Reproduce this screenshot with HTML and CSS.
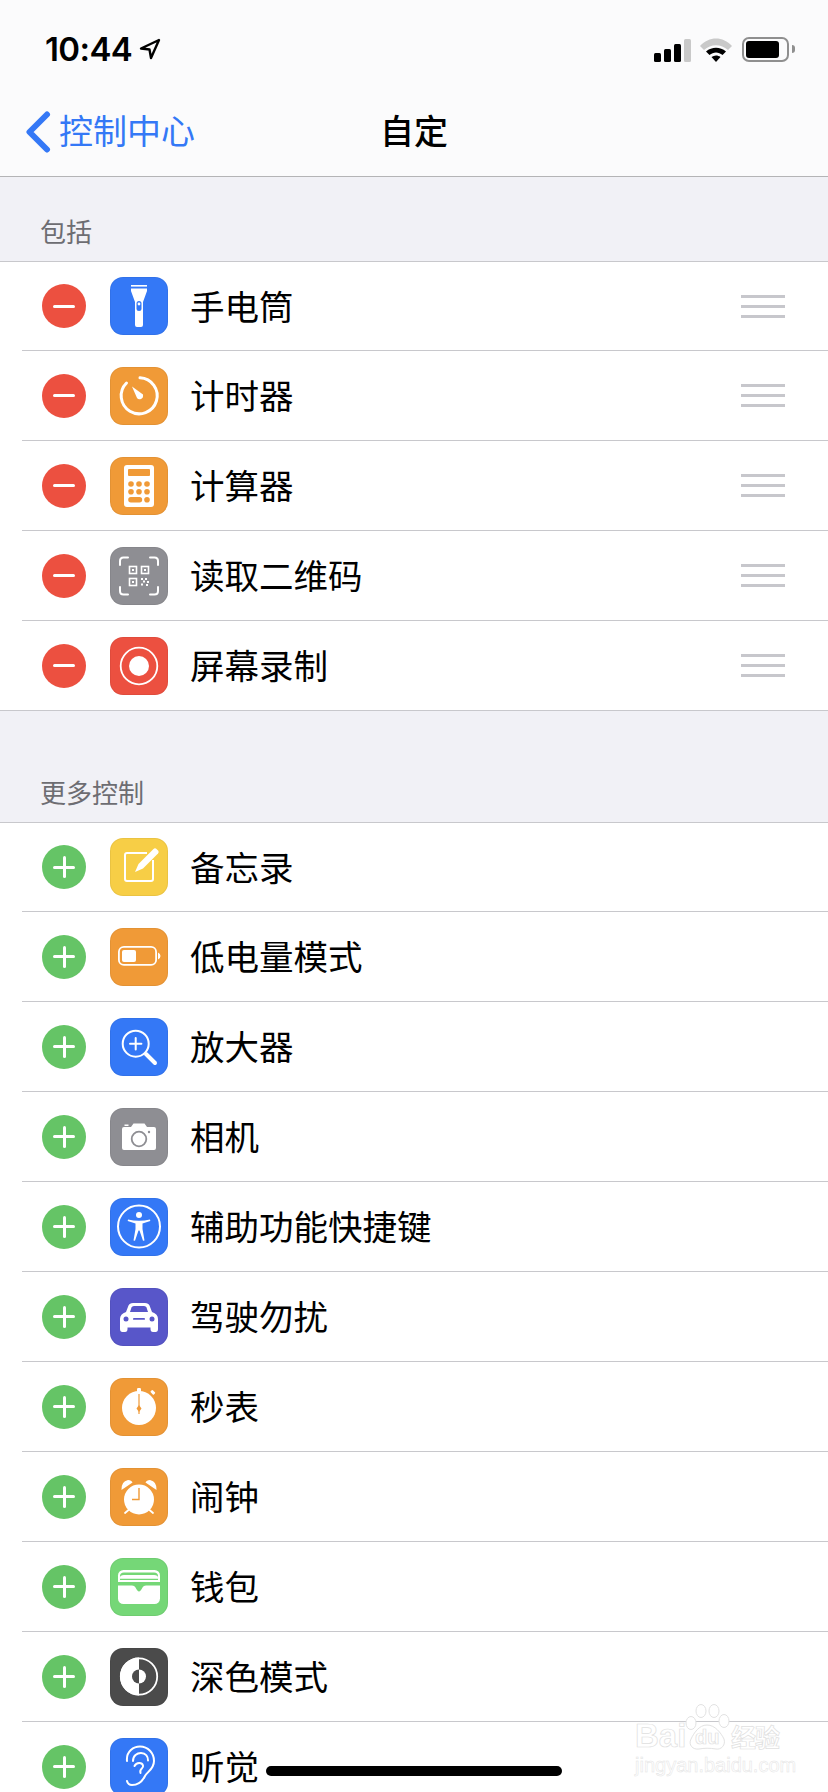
FILE: index.html
```html
<!DOCTYPE html>
<html lang="zh-CN">
<head>
<meta charset="utf-8">
<title>自定</title>
<link rel="stylesheet" href="styles.css">
</head>
<body>
<div class="phone">
  <header class="top">
    <div class="status">
      <div class="time-wrap">
        <span class="time">10:44</span>
        <svg class="loc" viewBox="0 0 22 22"><path d="M20 2 L2 10.5 L10.5 11.5 L12 20 Z" fill="none" stroke="#000" stroke-width="2.4" stroke-linejoin="round"/></svg>
      </div>
      <div class="indicators">
        <div class="signal"><i class="b1"></i><i class="b2"></i><i class="b3"></i><i class="b4"></i></div>
        <svg class="wifi" viewBox="0 0 32 24">
          <path d="M0 8 C9 -2 23 -2 32 8 L28 12 C21 5.5 11 5.5 4 12 Z" fill="#c9c9c9"/>
          <path d="M6 13.5 C12 8.5 20 8.5 26 13.5 L22.5 17 C18.5 13.5 13.5 13.5 9.5 17 Z" fill="#000"/>
          <path d="M11.5 19 C14.3 17 17.7 17 20.5 19 L16 24 Z" fill="#000"/>
        </svg>
        <div class="battery"><span class="battery-fill"></span></div>
        <span class="battery-nub"></span>
      </div>
    </div>
    <nav class="nav">
      <div class="back">
        <svg class="chev" viewBox="0 0 26 42"><path d="M22 3.5 L4.5 21 L22 38.5" fill="none" stroke="#3478f6" stroke-width="6" stroke-linecap="round" stroke-linejoin="round"/></svg>
        <span class="back-text">控制中心</span>
      </div>
      <div class="title">自定</div>
      <div></div>
    </nav>
  </header>

  <h2 class="sec sec-first">包括</h2>
  <ul class="list">
    <li class="row"><div class="body">
      <span class="act minus"></span>
      <span class="ico blue"><svg viewBox="0 0 58 58"><rect x="21" y="8" width="16" height="1.6" fill="#fff"/><path d="M21 11.5 H37 V14 L33 25 V48 Q33 50 31 50 H27 Q25 50 25 48 V25 L21 14 Z" fill="#fff"/><rect x="26.5" y="24" width="5" height="10" rx="2.5" fill="#3478f6"/><circle cx="29" cy="27" r="1.4" fill="#fff"/></svg></span>
      <span class="label">手电筒</span><span class="grip"><i></i><i></i><i></i></span>
    </div></li>
    <li class="row"><div class="body">
      <span class="act minus"></span>
      <span class="ico orange"><svg viewBox="0 0 58 58"><path d="M30 10.8 A18 18 0 1 1 16.5 16" fill="none" stroke="#fff" stroke-width="3" stroke-linecap="round"/><path d="M22 19.5 L33 27.5 Q33.5 31 31 32 Q28.5 33 27 31 Z" fill="#fff"/></svg></span>
      <span class="label">计时器</span><span class="grip"><i></i><i></i><i></i></span>
    </div></li>
    <li class="row"><div class="body">
      <span class="act minus"></span>
      <span class="ico orange"><svg viewBox="0 0 58 58"><rect x="14" y="8" width="30" height="42" rx="3" fill="#fff"/><rect x="18" y="12" width="22" height="7" rx="1" fill="#f09a37"/><g fill="#f09a37"><circle cx="21" cy="27" r="2.8"/><circle cx="29" cy="27" r="2.8"/><circle cx="37" cy="27" r="2.8"/><circle cx="21" cy="34.7" r="2.8"/><circle cx="29" cy="34.7" r="2.8"/><circle cx="37" cy="34.7" r="2.8"/><rect x="18.2" y="40" width="14" height="5.4" rx="2.7"/><circle cx="37" cy="42.7" r="2.8"/></g></svg></span>
      <span class="label">计算器</span><span class="grip"><i></i><i></i><i></i></span>
    </div></li>
    <li class="row"><div class="body">
      <span class="act minus"></span>
      <span class="ico gray"><svg viewBox="0 0 58 58"><g fill="none" stroke="#fff" stroke-width="2" stroke-linecap="round"><path d="M10 18 V14 Q10 10.5 13.5 10.5 H18"/><path d="M40 10.5 H44.5 Q48 10.5 48 14 V18"/><path d="M48 40 V44 Q48 47.5 44.5 47.5 H40"/><path d="M18 47.5 H13.5 Q10 47.5 10 44 V40"/></g><g fill="none" stroke="#fff" stroke-width="1.6"><rect x="19.5" y="19.5" width="7" height="7"/><rect x="31.5" y="19.5" width="7" height="7"/><rect x="19.5" y="31.5" width="7" height="7"/></g><g fill="#fff"><rect x="22" y="22" width="2" height="2"/><rect x="34" y="22" width="2" height="2"/><rect x="22" y="34" width="2" height="2"/><rect x="31" y="31" width="2" height="2"/><rect x="35" y="31" width="2" height="2"/><rect x="33" y="33.5" width="2" height="2"/><rect x="37" y="34" width="2" height="2"/><rect x="31" y="36.5" width="2" height="2"/><rect x="36" y="37" width="2" height="2"/></g></svg></span>
      <span class="label">读取二维码</span><span class="grip"><i></i><i></i><i></i></span>
    </div></li>
    <li class="row"><div class="body">
      <span class="act minus"></span>
      <span class="ico red"><svg viewBox="0 0 58 58"><circle cx="29" cy="29" r="18.3" fill="none" stroke="#fff" stroke-width="1.8"/><circle cx="29" cy="29" r="10" fill="#fff"/></svg></span>
      <span class="label">屏幕录制</span><span class="grip"><i></i><i></i><i></i></span>
    </div></li>
  </ul>

  <h2 class="sec sec-more">更多控制</h2>
  <ul class="list">
    <li class="row"><div class="body">
      <span class="act plus"></span>
      <span class="ico yellow"><svg viewBox="0 0 58 58"><path d="M37 15 H17 Q15 15 15 17 V41 Q15 43 17 43 H41 Q43 43 43 41 V22" fill="none" stroke="#fff" stroke-width="2"/><path d="M25 34 L28.5 26 L43.5 11 Q45 9.5 46.5 11 L48 12.5 Q49.5 14 48 15.5 L33 30.5 Z" fill="#fff"/></svg></span>
      <span class="label">备忘录</span>
    </div></li>
    <li class="row"><div class="body">
      <span class="act plus"></span>
      <span class="ico orange"><svg viewBox="0 0 58 58"><rect x="8.9" y="18.9" width="37.2" height="18" rx="5" fill="none" stroke="#fff" stroke-width="1.8"/><rect x="12" y="22" width="14" height="12" rx="2" fill="#fff"/><path d="M48 24.5 Q50.5 25.5 50.5 28 Q50.5 30.5 48 31.5 Z" fill="#fff"/></svg></span>
      <span class="label">低电量模式</span>
    </div></li>
    <li class="row"><div class="body">
      <span class="act plus"></span>
      <span class="ico blue"><svg viewBox="0 0 58 58"><circle cx="25.7" cy="25.7" r="13" fill="none" stroke="#fff" stroke-width="2"/><path d="M20 25.7 H31.4 M25.7 20 V31.4" stroke="#fff" stroke-width="2" stroke-linecap="round"/><path d="M36 36 L45 45" stroke="#fff" stroke-width="4" stroke-linecap="round"/></svg></span>
      <span class="label">放大器</span>
    </div></li>
    <li class="row"><div class="body">
      <span class="act plus"></span>
      <span class="ico gray"><svg viewBox="0 0 58 58"><path d="M14 19 H21 L23.5 15.5 H34.5 L37 19 H44 Q46 19 46 21 V40 Q46 42 44 42 H14 Q12 42 12 40 V21 Q12 19 14 19 Z" fill="#fff"/><rect x="14.5" y="16.5" width="4" height="1.5" fill="#fff"/><circle cx="29" cy="31" r="7.3" fill="#fff" stroke="#8e8e93" stroke-width="1.8"/><circle cx="39" cy="24" r="1.2" fill="#8e8e93"/></svg></span>
      <span class="label">相机</span>
    </div></li>
    <li class="row"><div class="body">
      <span class="act plus"></span>
      <span class="ico blue"><svg viewBox="0 0 58 58"><circle cx="29" cy="28.5" r="21" fill="none" stroke="#fff" stroke-width="2"/><circle cx="29" cy="17" r="3" fill="#fff"/><path d="M18 21.5 Q29 24 40 21.5 L40.3 23 L32.5 25.5 V31 L34.5 42.5 L33 42.8 L29.5 32.5 H28.5 L25 42.8 L23.5 42.5 L25.5 31 V25.5 L17.7 23 Z" fill="#fff"/></svg></span>
      <span class="label">辅助功能快捷键</span>
    </div></li>
    <li class="row"><div class="body">
      <span class="act plus"></span>
      <span class="ico indigo"><svg viewBox="0 0 58 58"><path d="M16 24 L18.5 17.5 Q19.5 15 23 15 H35 Q38.5 15 39.5 17.5 L42 24 Q48 26 48 31 V41 Q48 44 45.5 44 H43 Q40.5 44 40.5 41 V39.5 H17.5 V41 Q17.5 44 15 44 H12.5 Q10 44 10 41 V31 Q10 26 16 24 Z" fill="#fff"/><path d="M20 24 L21.5 19.5 Q22 18 24 18 H34 Q36 18 36.5 19.5 L38 24 Z" fill="#5856c9"/><circle cx="16" cy="31" r="2.5" fill="#5856c9"/><circle cx="42" cy="31" r="2.5" fill="#5856c9"/><rect x="23" y="30" width="12" height="1.8" rx=".9" fill="#5856c9"/></svg></span>
      <span class="label">驾驶勿扰</span>
    </div></li>
    <li class="row"><div class="body">
      <span class="act plus"></span>
      <span class="ico orange"><svg viewBox="0 0 58 58"><circle cx="29" cy="30" r="17" fill="#fff"/><rect x="27" y="10" width="4" height="8" rx="1.2" fill="#fff"/><rect x="40.5" y="13" width="4.5" height="3" rx=".8" transform="rotate(45 43 14.5)" fill="#fff"/><path d="M29 16 V36" stroke="#f09a37" stroke-width="1.2"/><path d="M29 27 L31.5 30.5 L29 34 L26.5 30.5 Z" fill="#f09a37"/></svg></span>
      <span class="label">秒表</span>
    </div></li>
    <li class="row"><div class="body">
      <span class="act plus"></span>
      <span class="ico orange"><svg viewBox="0 0 58 58"><circle cx="29" cy="31.5" r="15" fill="#fff"/><path d="M11.5 22 Q11 13.5 18 12 Q21.5 12 22.5 14.5 Z" fill="#fff"/><path d="M46.5 22 Q47 13.5 40 12 Q36.5 12 35.5 14.5 Z" fill="#fff"/><path d="M15 45 L18.5 42 M43 45 L39.5 42" stroke="#fff" stroke-width="1.8" stroke-linecap="round"/><path d="M29 20 V31.5 H22" fill="none" stroke="#f09a37" stroke-width="1.4"/></svg></span>
      <span class="label">闹钟</span>
    </div></li>
    <li class="row"><div class="body">
      <span class="act plus"></span>
      <span class="ico green"><svg viewBox="0 0 58 58"><rect x="8" y="12" width="42" height="34" rx="5.5" fill="#fff"/><path d="M10 18 Q10 14.5 14 14.5 H44 Q48 14.5 48 18 V22 H10 Z" fill="#75d777"/><path d="M10 19.5 Q10 17 14 17 H44 Q48 17 48 19.5 V20.8 H10 Z" fill="#fff"/><rect x="8" y="22.5" width="42" height="1.3" fill="#fff"/><path d="M8 24 H50 V27.5 H36 Q33.5 27.5 32.5 29.5 Q30.5 33.5 29 33.5 Q27.5 33.5 25.5 29.5 Q24.5 27.5 22 27.5 H8 Z" fill="#75d777"/></svg></span>
      <span class="label">钱包</span>
    </div></li>
    <li class="row"><div class="body">
      <span class="act plus"></span>
      <span class="ico dark"><svg viewBox="0 0 58 58"><circle cx="29" cy="28.5" r="18.2" fill="none" stroke="#fff" stroke-width="1.8"/><path d="M29 9.5 A19 19 0 0 0 29 47.5 Z" fill="#fff"/><circle cx="29" cy="28.5" r="7" fill="#4b4b4b"/><path d="M29 21.5 A7 7 0 0 1 29 35.5 Z" fill="#fff"/></svg></span>
      <span class="label">深色模式</span>
    </div></li>
    <li class="row"><div class="body">
      <span class="act plus"></span>
      <span class="ico blue"><svg viewBox="0 0 58 58"><g fill="none" stroke="#fff" stroke-width="2" stroke-linecap="round" stroke-linejoin="round"><path d="M17 23 C16 13 24 8.5 30 8.5 C38 8.5 44 15 44 23 C44 31 38 33 35 38 C32 44 28 47 22 47 C19 47 17.5 45 17 43"/><path d="M23 23 C23 17.5 27 15 31 15 C36 15 38 19 38 22.5"/><path d="M24.5 28 C26.5 24 32 24 33 27.5 C34 31 29 30 30.5 35"/></g></svg></span>
      <span class="label">听觉</span>
    </div></li>
  </ul>

  <div class="home"></div>
  <div class="mark">
    <div class="mark-top">
      <span class="mark-bai">Bai</span>
      <span class="paw">
        <svg viewBox="0 0 46 48"><g fill="#fff" stroke="#e2e2e2" stroke-width="1"><ellipse cx="6" cy="20" rx="5" ry="6.5"/><ellipse cx="16" cy="8" rx="5" ry="6.5"/><ellipse cx="29" cy="8" rx="5" ry="6.5"/><ellipse cx="39" cy="18" rx="5" ry="6.5"/><path d="M22 22 C30 22 36 30 39 36 C41 42 36 47 31 46 C25 45 19 45 14 46 C8 47 3 42 6 36 C9 30 14 22 22 22 Z"/></g></svg>
        <span class="mark-du">du</span>
      </span>
      <span class="mark-cn">经验</span>
    </div>
    <div class="mark-url">jingyan.baidu.com</div>
  </div>
</div>
</body>
</html>
```

FILE: styles.css
```css
* { box-sizing: border-box; }
html, body { margin: 0; padding: 0; }
body { width: 828px; height: 1792px; overflow: hidden; background: #f1f1f6; font-family: "Noto Sans CJK SC", "Noto Sans", sans-serif; color: #000; }
.phone { position: relative; width: 828px; height: 1792px; overflow: hidden; }

.top { height: 177px; background: #fbfbfc; border-bottom: 1px solid #b4b4b6; }
.status { height: 88px; padding: 35px 33px 0 45px; display: flex; justify-content: space-between; align-items: flex-start; }
.time-wrap { display: flex; align-items: center; gap: 7px; height: 28px; }
.time { font-family: Inter, Roboto, sans-serif; font-weight: 600; font-size: 33px; line-height: 28px; letter-spacing: -.6px; }
.loc { width: 22px; height: 22px; }
.indicators { display: flex; align-items: flex-start; }
.signal { display: flex; align-items: flex-end; gap: 3px; height: 24px; margin-top: 3px; margin-right: 9px; }
.signal i { display: block; width: 7px; border-radius: 1.5px; background: #000; }
.signal .b1 { height: 9px; }
.signal .b2 { height: 13px; }
.signal .b3 { height: 18px; }
.signal .b4 { height: 23px; background: #c9c9c9; }
.wifi { width: 32px; height: 24px; margin-top: 3px; margin-right: 10px; }
.battery { width: 47px; height: 25px; margin-top: 2px; border: 2px solid #8f8f8f; border-radius: 7px; padding: 2px; }
.battery-fill { display: block; width: 33px; height: 17px; background: #000; border-radius: 3px; }
.battery-nub { width: 3px; height: 8px; margin: 10px 0 0 3px; background: #8f8f8f; border-radius: 0 3px 3px 0; }

.nav { height: 88px; display: grid; grid-template-columns: 1fr auto 1fr; align-items: center; }
.back { display: flex; align-items: center; gap: 8px; margin-left: 25px; color: #3478f6; font-size: 34px; line-height: 48px; }
.back-text { margin-bottom: 4px; }
.chev { width: 26px; height: 42px; }
.title { font-size: 34px; line-height: 48px; font-weight: 500; margin-bottom: 4px; }

.sec { margin: 0; padding-left: 40px; font-size: 26px; font-weight: 400; color: #6d6d72; line-height: 38px; }
.sec-first { height: 84px; padding-top: 35px; }
.sec-more { height: 111px; padding-top: 62px; }

.list { margin: 0; padding: 0; list-style: none; background: #fff; border-top: 1px solid #c8c8cc; border-bottom: 1px solid #c8c8cc; }
.row { padding-left: 22px; }
.body { height: 90px; padding-left: 20px; display: flex; align-items: center; border-bottom: 1px solid #c8c8cc; }
.row:first-child .body { height: 89px; }
.row:last-child .body { border-bottom: 0; height: 89px; }

.act { position: relative; flex: none; width: 44px; height: 44px; border-radius: 50%; }
.minus { background: #ec5040; }
.plus { background: #65c466; }
.act::before { content: ""; position: absolute; left: 11px; top: 20.5px; width: 22px; height: 3px; background: #fff; border-radius: 1.5px; }
.plus::after { content: ""; position: absolute; left: 20.5px; top: 11px; width: 3px; height: 22px; background: #fff; border-radius: 1.5px; }

.ico { flex: none; width: 58px; height: 58px; margin-left: 24px; border-radius: 13px; box-shadow: inset 0 0 0 1px rgba(0,0,0,.05); display: block; }
.ico svg { display: block; width: 58px; height: 58px; }
.blue { background: #3478f6; }
.orange { background: #f09a37; }
.gray { background: #8e8e93; }
.red { background: #ec5040; }
.yellow { background: #f7ce46; }
.indigo { background: #5856c9; }
.green { background: #75d777; }
.dark { background: #4b4b4b; }

.label { flex: 1; margin-left: 22px; margin-bottom: 3px; font-size: 34.5px; line-height: 48px; }
.grip { flex: none; width: 44px; margin-right: 43px; display: flex; flex-direction: column; gap: 7px; }
.grip i { display: block; height: 3px; background: #c7c7cc; }

.home { position: absolute; left: 266px; top: 1766px; width: 296px; height: 10px; border-radius: 5px; background: #000; }

.mark { position: absolute; left: 635px; top: 1702px; width: 150px; }
.mark-top { display: flex; align-items: flex-end; height: 49px; }
.mark-bai, .mark-du, .mark-cn { color: #fff; -webkit-text-stroke: .7px #e0e0e0; }
.mark-url { color: #fff; -webkit-text-stroke: .5px #e4e4e4; }
.mark-bai { font-family: "Liberation Sans", sans-serif; font-weight: 700; font-size: 33px; line-height: 30px; width: 50px; }
.paw { position: relative; width: 46px; height: 48px; flex: none; }
.paw svg { display: block; width: 46px; height: 48px; }
.mark-du { position: absolute; left: 10px; bottom: 3px; font-family: "Liberation Sans", sans-serif; font-weight: 700; font-size: 20px; line-height: 22px; }
.mark-cn { font-size: 25px; line-height: 30px; flex: none; font-weight: 700; letter-spacing: -1px; }
.mark-url { font-family: "Liberation Sans", sans-serif; font-size: 20px; line-height: 22px; margin-top: 3px; white-space: nowrap; }
```
